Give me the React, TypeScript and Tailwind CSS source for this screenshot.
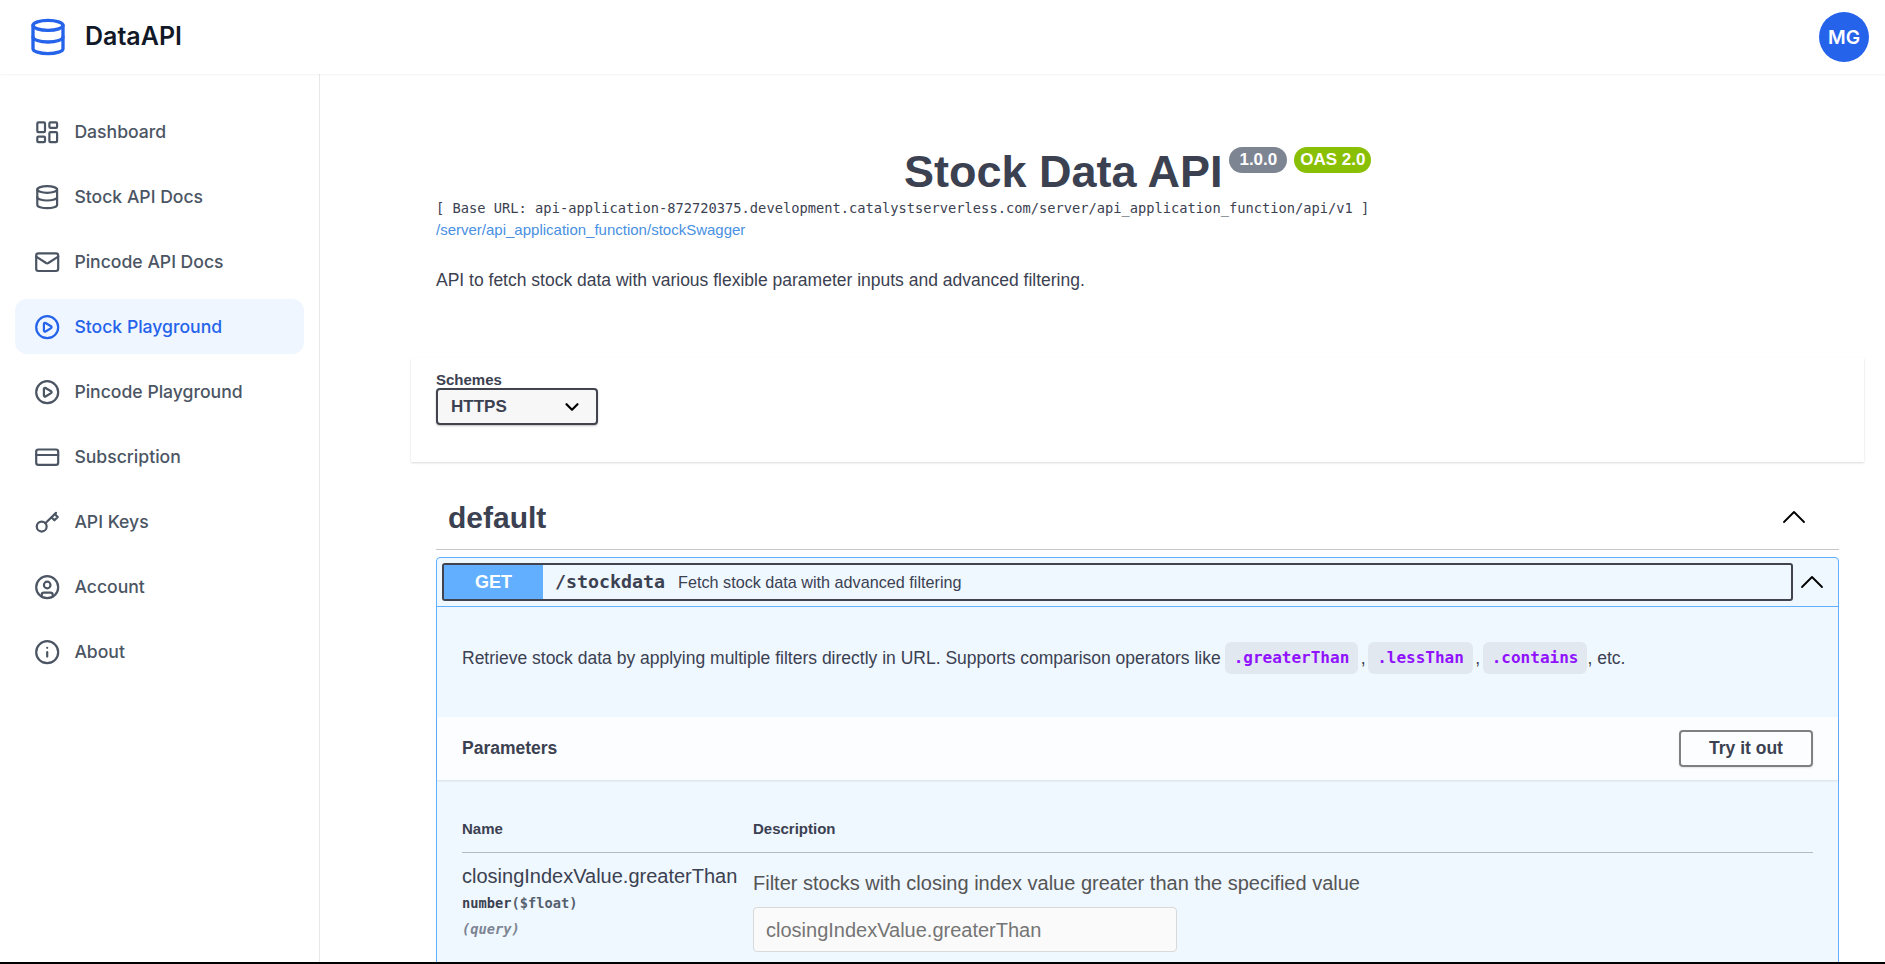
import React from "react";
import { Database, LayoutDashboard, Mail, CirclePlay, CreditCard, CircleUser, Info, ChevronDown, ChevronUp, type LucideProps } from "lucide-react";

const sans = "font-['Liberation_Sans',Arial,sans-serif]";
const mono = "font-['DejaVu_Sans_Mono',monospace]";

function ThinKey(props: LucideProps) {
  return (
    <svg viewBox="0 0 24 24" fill="none" stroke="currentColor" strokeWidth={2} strokeLinecap="round" strokeLinejoin="round" className={props.className}>
      <circle cx="7" cy="16" r="4.5" />
      <path d="M10.3 12.9 20 3.5" />
      <path d="m16 7.7 2.6 2.6 3-3-2.6-2.6" />
    </svg>
  );
}

const navItems: { label: string; icon: React.ComponentType<LucideProps>; active?: boolean }[] = [
  { label: "Dashboard", icon: LayoutDashboard },
  { label: "Stock API Docs", icon: Database },
  { label: "Pincode API Docs", icon: Mail },
  { label: "Stock Playground", icon: CirclePlay, active: true },
  { label: "Pincode Playground", icon: CirclePlay },
  { label: "Subscription", icon: CreditCard },
  { label: "API Keys", icon: ThinKey },
  { label: "Account", icon: CircleUser },
  { label: "About", icon: Info },
];

function Sidebar() {
  return (
    <aside className="w-[320px] shrink-0 border-r border-[#e5e7eb] bg-white px-[15px] pt-[30px]">
      <nav className="flex flex-col gap-[10px]">
        {navItems.map((item) => (
          <div
            key={item.label}
            className={`flex h-[55px] items-center gap-[14px] rounded-xl px-[19px] pt-[2px] text-[17.6px] font-medium ${item.active ? "bg-[#eff6ff] text-[#2563eb]" : "text-[#4b5563]"}`}
          >
            <item.icon className="h-[26.4px] w-[26.4px] shrink-0" strokeWidth={2} />
            <span>{item.label}</span>
          </div>
        ))}
      </nav>
    </aside>
  );
}

function Code({ children }: { children: string }) {
  return <code className={`${mono} flex h-[32px] items-center rounded-md bg-[#e2e8f0] px-[9px] text-base font-bold text-[#9012fe]`}>{children}</code>;
}

function SwaggerDocs() {
  return (
    <main className={`${sans} min-w-0 flex-1 overflow-hidden bg-white pl-[91px] pr-[21px] text-[#3b4151]`}>
      <section className="pl-[25px] pr-[25px] pt-[71px]">
        <div className="flex items-start pl-[468px]">
          <h1 className="text-[45px] leading-[54px] font-bold">Stock Data API</h1>
          <span className="ml-[7px] mt-[2px] rounded-full bg-[#7d8492] px-[10px] py-[2px] text-[17px] leading-[22px] font-bold text-white">1.0.0</span>
          <span className="ml-[7px] mt-[2px] rounded-full bg-[#89bf04] px-[6px] py-[2px] text-[17px] leading-[22px] font-bold text-white">OAS 2.0</span>
        </div>
        <p className={`${mono} text-[13.72px] leading-[18px]`}>[ Base URL: api-application-872720375.development.catalystserverless.com/server/api_application_function/api/v1 ]</p>
        <p className="mt-[3px] text-[15px] leading-[20px] text-[#4990e2]">/server/api_application_function/stockSwagger</p>
        <p className="mt-[28px] text-[17.5px] leading-[24px]">API to fetch stock data with various flexible parameter inputs and advanced filtering.</p>
      </section>

      <section className="mt-[66px] h-[104px] bg-white px-[25px] pt-[13px] shadow-[0_1px_2px_rgba(0,0,0,0.15)]">
        <p className="text-[15px] leading-[17px] font-bold">Schemes</p>
        <div className="flex h-[37px] w-[162px] items-center justify-between rounded border-2 border-[#41444e] bg-[#f7f7f7] pl-[13px] pr-[13px] text-[17px] font-bold shadow-[0_1px_2px_rgba(0,0,0,0.25)]">
          <span>HTTPS</span>
          <ChevronDown className="h-[22px] w-[22px] text-black" strokeWidth={2.4} />
        </div>
      </section>

      <section className="pl-[25px] pr-[25px]">
        <div className="mt-[30px] flex h-[58px] items-center justify-between border-b border-[#c6c7ca] pb-[7px] pl-[12px] pr-[25px]">
          <h2 className="text-[30px] font-bold">default</h2>
          <ChevronUp className="h-10 w-10 text-black" strokeWidth={1.1} />
        </div>

        <div className="mt-[7px] rounded-t border border-[#61affe] bg-[#eff7ff] pb-[40px]">
          <div className="flex h-[49px] items-center border-b border-[#61affe] pl-[5px] pr-[6px]">
            <div className="flex h-[38px] flex-1 items-center rounded-[3px] border-2 border-[#41444e]">
              <span className="flex h-full w-[99px] items-center justify-center bg-[#61affe] text-lg font-bold text-white">GET</span>
              <span className={`${mono} ml-[12px] text-[18.3px] font-bold`}>/stockdata</span>
              <span className="ml-[13px] text-[16.2px]">Fetch stock data with advanced filtering</span>
            </div>
            <ChevronUp className="-ml-px h-10 w-10 text-black" strokeWidth={1.1} />
          </div>

          <div className="h-[110px] pl-[25px] pt-[35px]">
            <div className="flex h-[32px] items-center text-[17.5px]">
              <span className="mr-[4px]">Retrieve stock data by applying multiple filters directly in URL. Supports comparison operators like</span>
              <Code>.greaterThan</Code>
              <span className="mx-[2.5px]">,</span>
              <Code>.lessThan</Code>
              <span className="mx-[2.5px]">,</span>
              <Code>.contains</Code>
              <span>, etc.</span>
            </div>
          </div>

          <div className="flex h-[63px] items-center justify-between bg-[#fbfdff] pl-[25px] pr-[25px] shadow-[0_1px_2px_rgba(0,0,0,0.1)]">
            <h4 className="text-[17.5px] font-bold">Parameters</h4>
            <button className="h-[37px] w-[134px] rounded border-2 border-[#808080] text-[17.5px] font-bold shadow-[0_1px_2px_rgba(0,0,0,0.1)]">Try it out</button>
          </div>

          <div className="px-[25px] pt-[38px]">
            <div className="flex h-[35px] border-b border-[#3b415155] text-[15px] font-bold">
              <div className="w-[291px]">Name</div>
              <div>Description</div>
            </div>
            <div className="flex">
              <div className="w-[291px] shrink-0 pt-[11px]">
                <p className="text-[20px] leading-[24px]">closingIndexValue.greaterThan</p>
                <p className={`${mono} mt-[6px] text-[13.7px] leading-[18px] font-bold`}>number<span className="text-[#55606e]">($float)</span></p>
                <p className={`${mono} mt-[8px] text-[13.7px] leading-[18px] font-bold text-[#7d8492] italic`}>(query)</p>
              </div>
              <div className="pt-[18px]">
                <p className="text-xl leading-[24px] text-[#555]">Filter stocks with closing index value greater than the specified value</p>
                <div className="mt-[12px] flex h-[45px] w-[424px] items-center rounded border border-[#d9d9d9] bg-[#fafafa] px-[12px] text-xl text-[#757575]">closingIndexValue.greaterThan</div>
              </div>
            </div>
          </div>
        </div>
      </section>
    </main>
  );
}

export default function App() {
  return (
    <div className="flex h-screen flex-col overflow-hidden border-b-2 border-black bg-white font-['Inter',sans-serif]">
      <header className="relative z-10 flex h-[74px] shrink-0 items-center justify-between bg-white pl-[28px] pr-[16px] shadow-[0_1px_2px_rgba(0,0,0,0.05)]">
        <div className="flex items-center gap-[17px]">
          <Database className="h-10 w-10 text-[#2563eb]" strokeWidth={2} />
          <span className="text-[25px] font-semibold text-[#111827]">DataAPI</span>
        </div>
        <div className="flex h-[50px] w-[50px] items-center justify-center rounded-full bg-[#2563eb] text-[19.2px] font-semibold text-white">MG</div>
      </header>
      <div className="flex min-h-0 flex-1">
        <Sidebar />
        <SwaggerDocs />
      </div>
    </div>
  );
}
